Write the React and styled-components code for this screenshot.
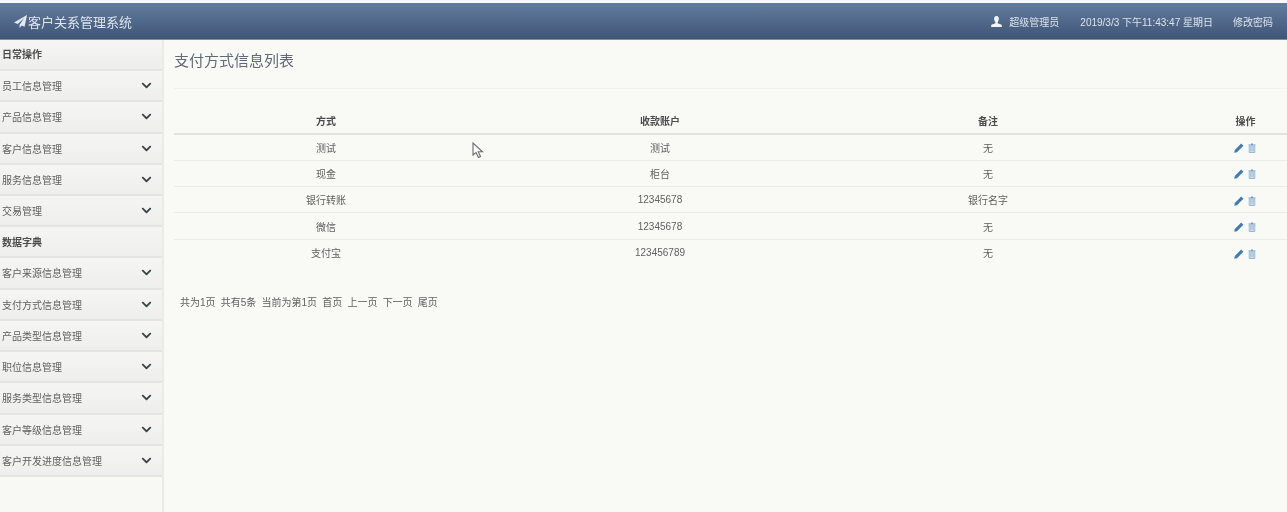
import React from 'react';
import styled, { createGlobalStyle } from 'styled-components';
import { FaChevronDown } from 'react-icons/fa';

const GlobalStyle = createGlobalStyle`
  html, body {
    margin: 0;
    padding: 0;
    height: 100%;
    overflow: hidden;
    background: #f9faf6;
  }
  body {
    font-family: "Liberation Sans", "Noto Sans CJK SC", sans-serif;
    color: #555;
  }
`;

const Page = styled.div`
  position: relative;
  width: 1287px;
  height: 512px;
  display: flex;
  flex-direction: column;
  filter: blur(0.55px);
  padding-top: 3px;
  box-sizing: border-box;
  background: #f9faf6;
`;

const Navbar = styled.header`
  flex: 0 0 37px;
  height: 37px;
  box-sizing: border-box;
  display: flex;
  align-items: center;
  justify-content: space-between;
  padding: 0 14px 0 14px;
  background: linear-gradient(to bottom, #627c9f, #3f5576);
  border-bottom: 1px solid #7f8fa3;
  color: #e4e8ee;
`;

const Brand = styled.div`
  display: flex;
  align-items: center;
  gap: 1px;
  font-size: 13px;
  color: #dfe4ea;
`;

const NavRight = styled.div`
  display: flex;
  align-items: center;
  font-size: 10px;
  color: #dde2e9;
`;

const NavUser = styled.span`
  display: flex;
  align-items: center;
  gap: 7px;
  margin-right: 21px;
`;

const NavClock = styled.span`
  margin-right: 20px;
`;

const Body = styled.div`
  flex: 1;
  display: flex;
  min-height: 0;
`;

const Sidebar = styled.aside`
  flex: 0 0 164px;
  width: 164px;
  box-sizing: border-box;
  border-right: 2px solid #eaeae8;
  background: #f8f9f5;
`;

const SectionRow = styled.div`
  height: 31px;
  box-sizing: border-box;
  display: flex;
  align-items: center;
  padding: 0 0 ${(p) => p.$lift}px 2px;
  font-size: 10px;
  font-weight: bold;
  color: #4c4c4c;
  background: linear-gradient(to bottom, #f5f5f3, #eeeeec);
  border-bottom: 2px solid #e4e4e2;
`;

const MenuRow = styled.div`
  height: 31.25px;
  box-sizing: border-box;
  display: flex;
  align-items: center;
  justify-content: space-between;
  padding: 0 10px 0 2px;
  font-size: 10px;
  color: #5f5f5f;
  background: linear-gradient(to bottom, #f5f5f3, #eeeeec);
  border-bottom: 2px solid #e4e4e2;
`;

const Chevron = styled(FaChevronDown)`
  width: 11px;
  height: 11px;
  color: #3a424c;
`;

const Main = styled.main`
  flex: 1;
  min-width: 0;
  padding: 0 0 0 10px;
`;

const Title = styled.h1`
  margin: 0;
  height: 49px;
  box-sizing: border-box;
  padding-top: 10px;
  font-size: 15px;
  line-height: 22px;
  font-weight: normal;
  color: #5f6b75;
  border-bottom: 1px solid #f0f0ec;
`;

const Table = styled.table`
  width: 1113px;
  margin-top: 19px;
  border-collapse: collapse;
  table-layout: fixed;
  font-size: 10px;
  color: #5f5f5f;
`;

const HeadCell = styled.th`
  height: 26px;
  padding: 0 0 1px;
  width: ${(p) => p.$width}px;
  font-weight: bold;
  color: #4c4c4c;
  border-bottom: 2px solid #e2e2e0;
  box-sizing: border-box;
  text-align: center;
`;

const Cell = styled.td`
  height: 26.3px;
  padding: 0;
  text-align: center;
  box-sizing: border-box;
  border-bottom: ${(p) => (p.$last ? 'none' : '1px solid #ebebe8')};
`;

const ActionHead = styled(HeadCell)`
  padding-left: 70px;
`;

const ActionCell = styled(Cell)`
  padding: 4px 0 0 68px;
`;

const Actions = styled.span`
  display: inline-flex;
  align-items: center;
  gap: 4px;
`;

const Pager = styled.div`
  display: flex;
  gap: 5.2px;
  margin: 31px 0 0 6px;
  font-size: 10px;
  line-height: 14px;
  color: #5f5f5f;
`;

const Cursor = styled.svg`
  position: absolute;
  left: 472px;
  top: 142px;
`;

const sidebarTop = ['员工信息管理', '产品信息管理', '客户信息管理', '服务信息管理', '交易管理'];
const sidebarDict = ['客户来源信息管理', '支付方式信息管理', '产品类型信息管理', '职位信息管理', '服务类型信息管理', '客户等级信息管理', '客户开发进度信息管理'];

const rows = [
  ['测试', '测试', '无'],
  ['现金', '柜台', '无'],
  ['银行转账', '12345678', '银行名字'],
  ['微信', '12345678', '无'],
  ['支付宝', '123456789', '无'],
];

const pager = ['共为1页', '共有5条', '当前为第1页', '首页', '上一页', '下一页', '尾页'];

function SendIcon() {
  return (
    <svg width="13" height="13" viewBox="0 0 14 14">
      <path d="M14 0 L0 8 L4 9.6 L11 3.2 L6 10.4 L6 14 L8.4 11.4 L11.4 12.6 Z" fill="#e6eaef" />
    </svg>
  );
}

function UserIcon() {
  return (
    <svg width="11" height="11" viewBox="0 0 12 12">
      <path d="M6 0 C8 0 8.8 1.6 8.6 3.4 C8.5 5 7.6 6.4 7.2 6.8 L7.2 7.8 L11.6 9.6 L12 12 L0 12 L0.4 9.6 L4.8 7.8 L4.8 6.8 C4.4 6.4 3.5 5 3.4 3.4 C3.2 1.6 4 0 6 0 Z" fill="#f1f3f6" />
    </svg>
  );
}

function PencilIcon() {
  return (
    <svg width="10" height="10" viewBox="0 0 10 10">
      <path d="M7.2 0.6 L9.4 2.8 L3 9.2 L0.2 9.8 L0.8 7 Z" fill="#3f7cb5" />
    </svg>
  );
}

function TrashIcon() {
  return (
    <svg width="8" height="10" viewBox="0 0 8 10">
      <path d="M3 0.5 H5 V1.5 H7.5 V2.5 H0.5 V1.5 H3 Z" fill="#6f9cc6" />
      <path d="M1.2 3.2 H6.8 V9.5 H1.2 Z M2.7 4 V8.7 M4 4 V8.7 M5.3 4 V8.7" fill="none" stroke="#7fa7cd" strokeWidth="0.8" />
    </svg>
  );
}

export default function App() {
  return (
    <Page>
      <GlobalStyle />
      <Navbar>
        <Brand>
          <SendIcon />
          客户关系管理系统
        </Brand>
        <NavRight>
          <NavUser>
            <UserIcon />
            超级管理员
          </NavUser>
          <NavClock>2019/3/3 下午11:43:47 星期日</NavClock>
          <span>修改密码</span>
        </NavRight>
      </Navbar>
      <Body>
        <Sidebar>
          <SectionRow $lift={3}>日常操作</SectionRow>
          {sidebarTop.map((item) => (
            <MenuRow key={item}>
              {item}
              <Chevron />
            </MenuRow>
          ))}
          <SectionRow $lift={0}>数据字典</SectionRow>
          {sidebarDict.map((item) => (
            <MenuRow key={item}>
              {item}
              <Chevron />
            </MenuRow>
          ))}
        </Sidebar>
        <Main>
          <Title>支付方式信息列表</Title>
          <Table>
            <thead>
              <tr>
                <HeadCell $width={304}>方式</HeadCell>
                <HeadCell $width={364}>收款账户</HeadCell>
                <HeadCell $width={292}>备注</HeadCell>
                <ActionHead $width={153}>操作</ActionHead>
              </tr>
            </thead>
            <tbody>
              {rows.map((row, i) => (
                <tr key={row[0]}>
                  {row.map((value, j) => (
                    <Cell key={j} $last={i === rows.length - 1}>{value}</Cell>
                  ))}
                  <ActionCell $last={i === rows.length - 1}>
                    <Actions>
                      <PencilIcon />
                      <TrashIcon />
                    </Actions>
                  </ActionCell>
                </tr>
              ))}
            </tbody>
          </Table>
          <Pager>
            {pager.map((item) => (
              <span key={item}>{item}</span>
            ))}
          </Pager>
        </Main>
      </Body>
      <Cursor width="12" height="17" viewBox="0 0 12 17">
        <path d="M1 1 L1 13 L4 10.5 L6.5 15.5 L8.5 14.5 L6.2 9.8 L10.5 9.8 Z" fill="#fbfbf9" stroke="#6c6c6c" strokeWidth="1.1" />
      </Cursor>
    </Page>
  );
}
